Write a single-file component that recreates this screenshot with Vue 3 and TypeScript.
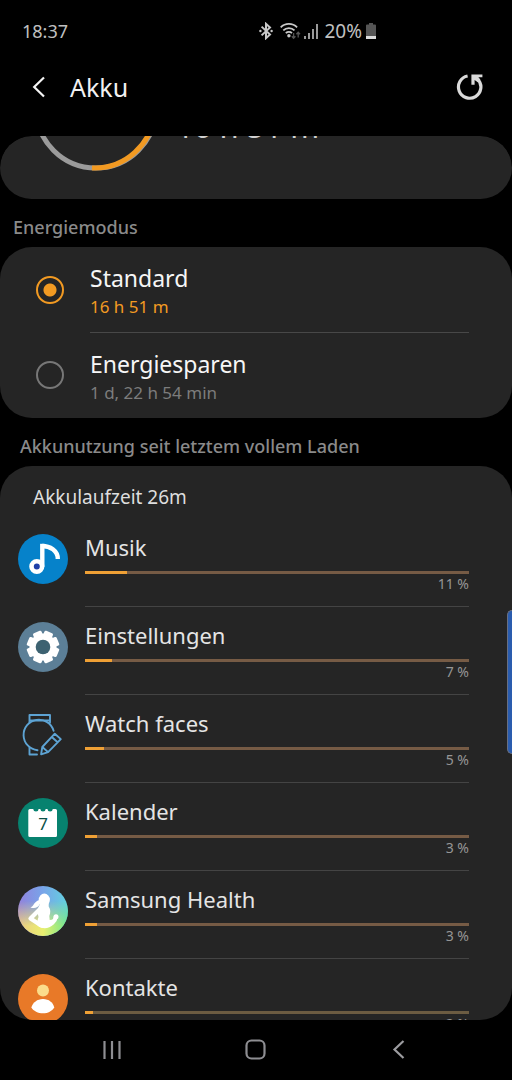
<script setup lang="ts">
import { ref } from 'vue'

interface Mode {
  id: string
  name: string
  duration: string
}

interface AppUsage {
  id: string
  name: string
  percent: number
}

const selectedMode = ref('standard')

const modes: Mode[] = [
  { id: 'standard', name: 'Standard', duration: '16 h 51 m' },
  { id: 'saving', name: 'Energiesparen', duration: '1 d, 22 h 54 min' },
]

const apps: AppUsage[] = [
  { id: 'music', name: 'Musik', percent: 11 },
  { id: 'settings', name: 'Einstellungen', percent: 7 },
  { id: 'watch', name: 'Watch faces', percent: 5 },
  { id: 'calendar', name: 'Kalender', percent: 3 },
  { id: 'health', name: 'Samsung Health', percent: 3 },
  { id: 'contacts', name: 'Kontakte', percent: 2 },
]

const teeth = [0, 45, 90, 135, 180, 225, 270, 315]
</script>

<template>
  <div class="screen">
    <div class="status">
      <span class="clock">18:37</span>
      <div class="status-icons">
        <svg class="bluetooth" width="14" height="18" viewBox="0 0 14 18" aria-hidden="true">
          <path d="M2.6 4.6 11 12.6 7 16.2V1.8l4 3.6-8.4 8" fill="none" stroke="#c8c8c8" stroke-width="2" />
          <circle cx="1.4" cy="9" r="1.2" fill="#c8c8c8" />
          <circle cx="12.6" cy="9" r="1.2" fill="#c8c8c8" />
        </svg>
        <svg class="wifi" width="21" height="18" viewBox="0 0 21 18" aria-hidden="true">
          <g fill="none" stroke="#c8c8c8" stroke-width="1.8">
            <path d="M.7 5.4a11.5 11.5 0 0 1 16.4 0" />
            <path d="M3.3 8.4a8 8 0 0 1 11.2 0" />
            <path d="M5.8 11.2a4.6 4.6 0 0 1 6.2 0" />
          </g>
          <circle cx="8.9" cy="13.8" r="1.7" fill="#c8c8c8" />
          <path d="M13.6 11v5M11.8 14.2l1.8 2 1.8-2M18.2 15.5v-5M16.4 12.2l1.8-2 1.8 2" fill="none" stroke="#555" stroke-width="1.3" />
        </svg>
        <svg class="signal" width="14" height="18" viewBox="0 0 14 18" aria-hidden="true">
          <path d="M1 17v-3M5 17v-6M9 17V7M13 17V2" stroke="#c0c0c0" stroke-width="1.6" />
        </svg>
        <span class="level">20%</span>
        <svg width="10" height="18" viewBox="0 0 10 18" aria-hidden="true">
          <path d="M0 3.5q0-1 1-1h2V1h4v1.5h2q1 0 1 1V14H0z" fill="#555" />
          <path d="M0 14h10v3H0z" fill="#dcdcdc" />
        </svg>
      </div>
    </div>

    <header class="header">
      <button class="icon-button" type="button" aria-label="Zurück">
        <svg width="14" height="22" viewBox="0 0 14 22" aria-hidden="true">
          <path d="M13 1.500 3.200 11 13 20.500" fill="none" stroke="#f4f4f4" stroke-width="2.200" />
        </svg>
      </button>
      <h1>Akku</h1>
      <button class="icon-button" type="button" aria-label="Aktualisieren">
        <svg width="28" height="28" viewBox="0 0 28 28" aria-hidden="true">
          <path d="M11.600 3A11.200 11.200 0 1 0 22 6.500" fill="none" stroke="#dadada" stroke-width="3.200" />
          <path d="M15.400 1.500h11v2.800h-4l2 2.500-2.600 2.500-3.200-2.400v4.800h-3.200z" fill="#dadada" />
        </svg>
      </button>
    </header>

    <main class="content">
      <section class="card summary" aria-label="Verbleibende Laufzeit">
        <svg class="ring" width="126" height="126" viewBox="0 0 126 126" aria-hidden="true">
          <circle cx="63" cy="63" r="60" fill="none" stroke="#9b9b9b" stroke-width="5" />
          <path d="M60 123A60 60 0 0 0 63 3" transform="rotate(1 63 63)" fill="none" stroke="#f29a22" stroke-width="5" />
        </svg>
        <span class="remaining">16 h 51 m</span>
      </section>

      <h2>Energiemodus</h2>
      <div class="card" role="radiogroup" aria-label="Energiemodus">
        <label v-for="mode in modes" :key="mode.id" class="mode">
          <input v-model="selectedMode" type="radio" name="mode" :value="mode.id" />
          <span class="mode-text">
            <span class="mode-name">{{ mode.name }}</span>
            <span class="mode-time">{{ mode.duration }}</span>
          </span>
        </label>
      </div>

      <h2 class="indented">Akkunutzung seit letztem vollem Laden</h2>
      <section class="card usage">
        <h3>Akkulaufzeit 26m</h3>
        <ul>
          <li v-for="app in apps" :key="app.id" class="app">
            <svg class="app-icon" width="50" height="50" viewBox="0 0 50 50" aria-hidden="true">
              <g v-if="app.id === 'music'">
                <circle cx="25" cy="25" r="25" fill="#0682ca" />
                <path d="M24.300 12c7.500 0 15.500 4.500 15.500 13" fill="none" stroke="#fff" stroke-width="4.400" />
                <path d="M22.100 9.800h4.400v23h-4.400z" fill="#fff" />
                <circle cx="18.800" cy="32.500" r="5.300" fill="#1f3fa8" stroke="#fff" stroke-width="4.600" />
              </g>
              <g v-else-if="app.id === 'settings'">
                <circle cx="25" cy="25" r="25" fill="#5c7f97" />
                <circle cx="25" cy="25" r="13.500" fill="#fff" />
                <rect v-for="angle in teeth" :key="angle" x="20.400" y="8.800" width="9.200" height="8" rx="1.500" fill="#fff" :transform="`rotate(${angle + 22.5} 25 25)`" />
                <circle cx="25" cy="25" r="7.300" fill="#3d6271" />
              </g>
              <g v-else-if="app.id === 'watch'" fill="none" stroke="#5da3d3" stroke-width="1.900" stroke-linejoin="round" stroke-linecap="round">
                <path d="M11.500 12.500V5h20.500v7.500M12 10.500h19.500" />
                <path d="M35.600 20.800A15.300 15.300 0 1 0 19.500 40.200" />
                <path d="M11.500 37.500v7h7.500M36.800 23.700l6 5.400-12.700 13-7 2.200 1.200-7.300zM33.800 27l5.800 5.200M24.300 37l5.800 5.100" />
              </g>
              <g v-else-if="app.id === 'calendar'">
                <circle cx="25" cy="25" r="25" fill="#07826f" />
                <path d="M10.300 12.500q0-1.500 1.500-1.500h3.400q.3 2.500 2.800 2.500t2.600-2.500h1.700q.3 2.500 2.700 2.500t2.700-2.500h1.700q.3 2.500 2.700 2.500t2.700-2.500h2.700q1.500 0 1.500 1.500v25q0 1.500-1.500 1.500H11.800q-1.500 0-1.500-1.500z" fill="#fff" />
                <text x="25" y="32" text-anchor="middle" class="day">7</text>
              </g>
              <g v-else-if="app.id === 'health'">
                <defs>
                  <linearGradient id="healthTop" x1="0" y1="0" x2="1" y2="0">
                    <stop offset="0" stop-color="#9181dd" />
                    <stop offset=".5" stop-color="#78a5e9" />
                    <stop offset="1" stop-color="#62d2df" />
                  </linearGradient>
                  <linearGradient id="healthBottom" x1="0" y1="0" x2="1" y2="0">
                    <stop offset="0" stop-color="#eecb83" />
                    <stop offset=".5" stop-color="#e9ef70" />
                    <stop offset="1" stop-color="#70e889" />
                  </linearGradient>
                  <linearGradient id="healthFade" x1="0" y1="0" x2="0" y2="1">
                    <stop offset=".3" stop-color="#000" />
                    <stop offset=".8" stop-color="#fff" />
                  </linearGradient>
                  <mask id="healthMask"><rect width="50" height="50" fill="url(#healthFade)" /></mask>
                </defs>
                <circle cx="25" cy="25" r="25" fill="url(#healthTop)" />
                <circle cx="25" cy="25" r="25" fill="url(#healthBottom)" mask="url(#healthMask)" />
                <g fill="#fff">
                  <ellipse cx="26.300" cy="13.800" rx="5.600" ry="6.200" />
                  <path d="M22 14c-4 .5-5.500 3.500-7 5.500-.8 1-1.500 1.500-2.500 2 4 1.200 7.500.5 9.500-3.500z" />
                  <path d="M22.500 17h8.200v3.500c2 3 2 6 .6 9.500l.4 4 3.800-.5-2.500 6L27 42c-4 .3-7-1.500-8.500-4l2-7-1.500-7z" />
                </g>
                <path d="M20.500 24.500 12.500 32.500 22 38.800c5 2.600 9.500.4 12.500-2.200 1.800-1.600 3-3 3.200-5.400" fill="none" stroke="#fff" stroke-width="4.200" stroke-linecap="round" stroke-linejoin="round" />
                <circle cx="38" cy="30.800" r="2.500" fill="#fff" />
              </g>
              <g v-else>
                <circle cx="25" cy="25" r="25" fill="#e87928" />
                <circle cx="25" cy="16.500" r="6" fill="#fbdc8b" />
                <path d="M13.300 33.500C15 28.500 19 25 25 25s10 3.500 11.300 8.500C34 37 30 39.300 25 39.300S15.500 37 13.300 33.500z" fill="#fff" />
              </g>
            </svg>
            <div class="app-body">
              <label class="app-name" :for="`usage-${app.id}`">{{ app.name }}</label>
              <progress :id="`usage-${app.id}`" :class="{ last: app.id === 'contacts' }" :value="app.percent" max="100"></progress>
              <span class="percent">{{ app.percent }} %</span>
            </div>
          </li>
        </ul>
      </section>
    </main>

    <nav class="navbar" aria-label="Systemnavigation">
      <button type="button" aria-label="Letzte Apps">
        <svg width="20" height="20" viewBox="0 0 20 20" aria-hidden="true">
          <path d="M2.500 1v18M10 1v18M17.500 1v18" stroke="#8e8e92" stroke-width="2.200" />
        </svg>
      </button>
      <button type="button" aria-label="Startseite">
        <svg width="22" height="22" viewBox="0 0 22 22" aria-hidden="true">
          <rect x="1.500" y="1.500" width="18" height="18" rx="5" fill="none" stroke="#8e8e92" stroke-width="2.200" />
        </svg>
      </button>
      <button type="button" aria-label="Zurück">
        <svg width="20" height="20" viewBox="0 0 20 20" aria-hidden="true">
          <path d="M13.500 1 4.500 9.500l9 8.500" fill="none" stroke="#9c9ca0" stroke-width="2.200" />
        </svg>
      </button>
    </nav>

    <div class="edge-handle"></div>
  </div>
</template>

<style>
html,
body {
  background: #000;
}
</style>

<style scoped>
.screen {
  position: relative;
  display: flex;
  flex-direction: column;
  height: 100vh;
  background: #000;
  color: #f2f2f2;
  font-family: "Noto Sans", "Open Sans", sans-serif;
}

h1,
h2,
h3,
ul {
  margin: 0;
  padding: 0;
  font-weight: 400;
}

button {
  display: flex;
  align-items: center;
  justify-content: center;
  padding: 0;
  border: 0;
  background: none;
}

svg {
  display: block;
  flex: none;
}

.status {
  display: flex;
  flex: none;
  align-items: center;
  justify-content: space-between;
  height: 62px;
  padding: 0 136px 0 22px;
  color: #c0c0c0;
  font-size: 18px;
}

.status-icons {
  display: flex;
  align-items: center;
}

.wifi {
  margin-left: 7px;
}

.signal {
  margin: 0 6px 0 3px;
}

.level {
  margin-right: 4px;
  font-size: 19px;
  line-height: 24px;
}

.header {
  display: flex;
  flex: none;
  align-items: center;
  height: 50px;
  margin-bottom: 24px;
  padding: 0 24px 0 20px;
}

.header .icon-button {
  width: 36px;
  height: 36px;
}

h1 {
  flex: 1;
  padding-left: 14px;
  font-size: 25px;
  line-height: 32px;
}

.content {
  flex: 1;
  min-height: 0;
  overflow-y: auto;
  scrollbar-width: none;
  border-radius: 32px;
}

.card {
  border-radius: 32px;
  background: #252525;
}

.summary {
  display: flex;
  align-items: flex-end;
  height: 63px;
  padding: 0 33px;
  overflow: hidden;
}

.ring {
  margin-bottom: 28px;
}

.remaining {
  margin: 0 0 53px 17px;
  color: #d0d0d0;
  font-size: 31px;
  line-height: 40px;
}

h2 {
  padding: 16px 13px 8px;
  color: #8a8a8a;
  font-size: 18px;
  font-weight: 500;
  line-height: 24px;
}

h2.indented {
  padding-left: 20px;
}

.mode {
  display: flex;
  align-items: center;
  padding: 0 43px 0 36px;
}

.mode input {
  flex: none;
  width: 28px;
  height: 28px;
  margin: 0 26px 0 0;
  appearance: none;
  border: 2px solid #777;
  border-radius: 50%;
}

.mode input:checked {
  border-color: #f29a22;
  background: radial-gradient(circle, #f29a22 6px, transparent 7px);
}

.mode-text {
  display: flex;
  flex: 1;
  flex-direction: column;
  padding: 15px 0 12px;
}

.mode + .mode .mode-text {
  border-top: 1px solid #484848;
}

.mode-name {
  color: #f6f6f6;
  font-size: 23px;
  line-height: 32px;
}

.mode-time {
  color: #7c7c7c;
  font-size: 17px;
  line-height: 26px;
}

.mode input:checked + .mode-text .mode-time {
  color: #f29a22;
}

.usage {
  padding-top: 18px;
}

h3 {
  padding: 0 33px 9px;
  color: #dedede;
  font-size: 19px;
  line-height: 26px;
}

ul {
  list-style: none;
}

.app {
  display: flex;
  padding: 0 43px 0 18px;
}

.app-icon {
  margin: 15px 17px 0 0;
}

.day {
  fill: #0a5148;
  font-size: 17px;
}

.app-body {
  display: flex;
  flex: 1;
  flex-direction: column;
  padding: 13px 0 12px;
  border-bottom: 1px solid #444;
}

.app-name {
  margin-bottom: 9px;
  color: #e4e4e4;
  font-size: 22px;
  line-height: 30px;
}

progress {
  display: block;
  width: 100%;
  height: 3px;
  appearance: none;
  border: 0;
  background: #765b45;
}

progress.last {
  background: #6c5c42;
}

progress::-webkit-progress-bar {
  background: transparent;
}

progress::-webkit-progress-value {
  background: #efa035;
}

.percent {
  align-self: flex-end;
  color: #969696;
  font-size: 14px;
  line-height: 20px;
}

.navbar {
  display: flex;
  flex: none;
  align-items: center;
  justify-content: space-around;
  height: 60px;
  padding: 0 40px;
}

.navbar button {
  width: 48px;
  height: 48px;
}

.edge-handle {
  position: absolute;
  top: 610px;
  right: 0;
  box-sizing: border-box;
  width: 5px;
  height: 144px;
  border: 1px solid #687083;
  border-right: 0;
  border-radius: 5px 0 0 5px;
  background: #2a5cae;
}
</style>
